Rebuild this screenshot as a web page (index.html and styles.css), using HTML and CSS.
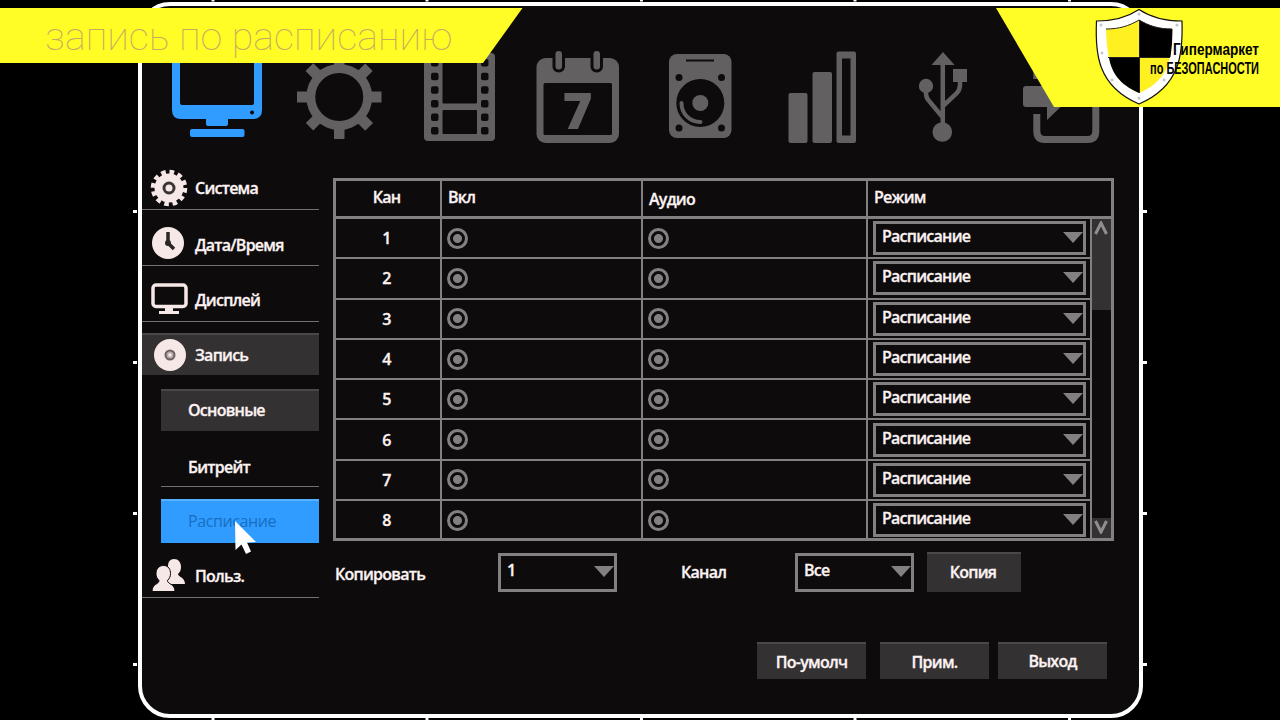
FILE: index.html
```html
<!DOCTYPE html>
<html lang="ru">
<head>
    <meta charset="UTF-8">
    <meta name="viewport" content="width=device-width, initial-scale=1.0">
    <title>Запись по расписанию</title>
    <link rel="stylesheet" href="styles.css">
</head>
<body>
    <div class="screen">
        <!-- border ticks -->
        <svg class="ticks" width="1280" height="720" fill="#fff">
            <path d="M211.500 0h3v1.500h-3zM425.500 0h3v1.500h-3zM640 0h3v1.500h-3zM853.500 0h3v1.500h-3zM1068 0h3v1.500h-3z"/>
            <path d="M211.500 718h3v2h-3zM425.500 718h3v2h-3zM640 718h3v2h-3zM853.500 718h3v2h-3zM1068 718h3v2h-3z"/>
            <path d="M133 210h4v3h-4zM133 361h4v3h-4zM133 512h4v3h-4zM133 663h4v3h-4z"/>
            <path d="M1143 210h4v3h-4zM1143 361h4v3h-4zM1143 512h4v3h-4zM1143 663h4v3h-4z"/>
        </svg>

        <div class="frame">
            <div class="toolbar">
                <svg class="tool active" width="92" height="100" viewBox="171 46 92 100">
                    <path fill-rule="evenodd" d="M180 48h74q8 0 8 8v54q0 9-9 9h-25v5q0 2-3 2h-16q-3 0-3-2v-5h-25q-9 0-9-9V56q0-8 8-8zm2 8q-2 0-2 2v45q0 2 2 2h70q2 0 2-2V58q0-2-2-2zm70 54.500a2 2 0 1 0 .1 0z"/>
                    <rect x="190" y="129" width="54.500" height="8" rx="2"/>
                </svg>
                <svg class="tool gear" width="86" height="100" viewBox="296 46 86 100">
                    <path d="M334 55h10.500v84H334zM297 91.500h84.500v11H297z"/>
                    <path transform="rotate(45 339.250 97)" d="M334 55h10.500v84H334zM297 91.500h84.500v11H297z"/>
                    <circle cx="339.250" cy="97" r="33"/>
                    <circle class="hole" cx="339.250" cy="97" r="24"/>
                </svg>
                <svg class="tool film" width="72" height="100" viewBox="424 46 72 100">
                    <rect x="424" y="53" width="71" height="88" rx="4"/>
                    <g class="hole">
                        <rect x="442.500" y="60" width="34.500" height="43.500" rx="1"/>
                        <rect x="442.500" y="110" width="34.500" height="24" rx="1"/>
                        <g id="holes">
                            <rect x="431" y="59" width="7.500" height="7.500" rx="2"/>
                            <rect x="431" y="72.700" width="7.500" height="7.500" rx="2"/>
                            <rect x="431" y="86.300" width="7.500" height="7.500" rx="2"/>
                            <rect x="431" y="100" width="7.500" height="7.500" rx="2"/>
                            <rect x="431" y="113.500" width="7.500" height="7.500" rx="2"/>
                            <rect x="431" y="127" width="7.500" height="7.500" rx="2"/>
                        </g>
                        <use href="#holes" x="50"/>
                    </g>
                </svg>
                <svg class="tool calendar" width="84" height="100" viewBox="536 46 84 100">
                    <rect x="536.500" y="58" width="82.500" height="85" rx="9"/>
                    <rect class="hole" x="543.500" y="83" width="68.500" height="52" rx="1.500"/>
                    <rect class="hole" x="552.500" y="48" width="12.500" height="24.500" rx="6"/>
                    <rect class="hole" x="590.500" y="48" width="12.500" height="24.500" rx="6"/>
                    <rect x="555.500" y="51" width="6.500" height="18.500" rx="3.200"/>
                    <rect x="593.500" y="51" width="6.500" height="18.500" rx="3.200"/>
                    <text class="day" x="562.500" y="128.500" textLength="30" lengthAdjust="spacingAndGlyphs">7</text>
                </svg>
                <svg class="tool disk" width="64" height="100" viewBox="668 46 64 100">
                    <rect x="669" y="54" width="62.500" height="84" rx="8"/>
                    <rect class="hole" x="686" y="59.500" width="28" height="2"/>
                    <g class="hole">
                        <circle cx="679" cy="77.500" r="3.500"/>
                        <circle cx="721.500" cy="77.500" r="3.500"/>
                        <circle cx="679" cy="128" r="3.500"/>
                        <circle cx="721.500" cy="128" r="3.500"/>
                        <circle cx="700.300" cy="103" r="24"/>
                    </g>
                    <circle cx="700.300" cy="103" r="8"/>
                    <path class="line" stroke-width="4" stroke-linecap="round" d="M681.500 103c0 11 8.500 19 19 19"/>
                </svg>
                <svg class="tool bars" width="70" height="100" viewBox="787 46 70 100">
                    <rect x="788.500" y="93" width="19" height="50" rx="2"/>
                    <rect x="812.500" y="72" width="19.500" height="71" rx="2"/>
                    <rect x="836.500" y="51.500" width="19.500" height="91.500" rx="2"/>
                    <rect class="hole" x="842" y="58.500" width="8.500" height="77"/>
                </svg>
                <svg class="tool usb" width="50" height="100" viewBox="918 46 50 100">
                    <path d="M943 52l11.500 13h-23z"/>
                    <circle cx="942.300" cy="132" r="9.800"/>
                    <circle cx="926" cy="86" r="7.200"/>
                    <rect x="953" y="69" width="14" height="13"/>
                    <path class="line" stroke-width="4.500" d="M942.800 62v65M926 88v6q0 4 4 8l12.500 15M960 80v5q0 5-4 9l-13 12"/>
                </svg>
                <svg class="tool logout" width="78" height="100" viewBox="1022 46 78 100">
                    <path class="line" stroke-width="7" d="M1036.800 79v-9q0-10 10-10h38q11 0 11 10v61q0 8.500-8 8.500h-43q-8 0-8-8.500v-17"/>
                    <path d="M1026 86h21V72l25 24-25 24v-13h-21q-3 0-3-3V89q0-3 3-3z"/>
                </svg>
            </div>

            <div class="main">
                <div class="sidebar">
                    <div class="item">
                        <svg class="icon" width="38" height="38" viewBox="-19 -19 38 38">
                            <circle r="14.500"/>
                            <circle r="16" fill="none" stroke="#f7e8e8" stroke-width="4.500" stroke-dasharray="4.600 3.780"/>
                            <circle r="5" fill="none" stroke="#3a3535" stroke-width="3"/>
                        </svg>
                        <span>Система</span>
                    </div>
                    <div class="item time">
                        <svg class="icon" width="38" height="38" viewBox="-19 -19 38 38">
                            <circle cx="-1" cy="-1" r="16"/>
                            <path d="M-1-12v11l6 6" fill="none" stroke="#2a2626" stroke-width="3.500"/>
                            <circle cx="-1" cy="-1" r="3" fill="#2a2626"/>
                        </svg>
                        <span>Дата/Время</span>
                    </div>
                    <div class="item">
                        <svg class="icon" width="38" height="38" viewBox="-19 -19 38 38">
                            <rect x="-16" y="-15" width="33" height="21.500" rx="3" fill="none" stroke="#f7e8e8" stroke-width="3.500"/>
                            <path d="M-4 7h8v4h6v3h-20v-3h6z"/>
                        </svg>
                        <span>Дисплей</span>
                    </div>
                    <div class="item filled">
                        <svg class="icon" width="38" height="38" viewBox="-19 -19 38 38">
                            <circle cx="1" r="16"/>
                            <circle cx="1" r="4.500" fill="#b5a9a9" stroke="#6b6363" stroke-width="2"/>
                            <circle cx="1" r="1.800" fill="#f7e8e8"/>
                        </svg>
                        <span>Запись</span>
                    </div>
                    <div class="item sub filled"><span>Основные</span></div>
                    <div class="item sub bitrate"><span>Битрейт</span></div>
                    <div class="item sub selected"><span>Расписание</span></div>
                    <div class="item users">
                        <svg class="icon" width="38" height="38" viewBox="-19 -19 38 38">
                            <path d="M5-17c4.500 0 7 3.500 7 8 0 3-1 5-3 7 0 3 7 3 7 10H-1v-18c0-4 2-7 6-7z"/>
                            <path stroke="#0d0b0c" d="M-5.500-10.500c5 0 7 4 7 8 0 3-1 5-3 7 0 4 7.500 3 7.500 11h-23c0-8 7-7 7-11-2-2-3-4-3-7 0-4 2.500-8 7.500-8z"/>
                        </svg>
                        <span>Польз.</span>
                    </div>
                </div>

                <div class="content">
                    <div class="table">
                        <div class="row head">
                            <div class="cell num">Кан</div>
                            <div class="cell">Вкл</div>
                            <div class="cell audio">Аудио</div>
                            <div class="cell">Режим</div>
                        </div>
                        <div class="body">
                            <div class="rows" id="rows"></div>
                            <div class="scrollbar">
                                <div class="thumb">
                                    <svg width="16" height="14" viewBox="0 0 16 14"><path d="M2.500 13L8 2l5.500 11"/></svg>
                                </div>
                                <div class="down">
                                    <svg width="16" height="14" viewBox="0 0 16 14"><path d="M2.500 1L8 12l5.500-11"/></svg>
                                </div>
                            </div>
                        </div>
                    </div>

                    <div class="copy">
                        <span class="copy-from">Копировать</span>
                        <div class="select"><span>1</span><i class="arrow"></i></div>
                        <span class="copy-to">Канал</span>
                        <div class="select"><span>Все</span><i class="arrow"></i></div>
                        <div class="button">Копия</div>
                    </div>

                    <div class="actions">
                        <div class="button">По-умолч</div>
                        <div class="button">Прим.</div>
                        <div class="button exit">Выход</div>
                    </div>
                </div>
            </div>
        </div>

        <svg class="banner" width="1280" height="110">
            <path fill="#fffc26" d="M0 8h522.500L483 63H0z"/>
            <text class="title" x="45" y="49.500" textLength="408" lengthAdjust="spacingAndGlyphs">запись по расписанию</text>
            <path fill="#fffc26" d="M996 8h284v99h-226z"/>
            <path fill="#fff" stroke="#15120c" stroke-width="1.200" d="M1139 9.500c12 8 26 11.500 43 11.500 1 32-1 65-43 83-42-18-44-51-42.500-83 17 0 30.500-3.500 42.500-11.500z"/>
            <path fill="#fff022" d="M1139 20c10 6 20 9 33 9-.5 29-2 51-33 64-29-13-32-35-33-64 13 0 23-3 33-9z"/>
            <path d="M1139.500 20c10 6 20 9 33 9q0 15-2 28h-31zM1139 58v35c-20-9-27-20-30-35z"/>
            <path stroke="#222" stroke-width="1" fill="none" d="M1106 29c13 0 23-3 33-9 10 6 20 9 33 9M1139.500 20v73M1108 57.500h62"/>
            <g fill="#c3c6cf">
                <circle cx="1139" cy="14" r="1.500"/>
                <circle cx="1101" cy="25" r="1.500"/>
                <circle cx="1177" cy="25" r="1.500"/>
                <circle cx="1102" cy="53" r="1.500"/>
                <circle cx="1112" cy="80" r="1.500"/>
                <circle cx="1164" cy="80" r="1.500"/>
                <circle cx="1139" cy="98" r="1.500"/>
            </g>
            <text class="brand" x="1173" y="55" textLength="86" lengthAdjust="spacingAndGlyphs">Гипермаркет</text>
            <text class="brand" x="1150" y="74" textLength="109" lengthAdjust="spacingAndGlyphs">по БЕЗОПАСНОСТИ</text>
        </svg>

        <svg class="cursor" width="24" height="36" viewBox="0 0 24 36">
            <path fill="#fff" d="M1 1l21 21-9 .500 4 9-5 2.500-4.500-9.500-6 5.500z"/>
        </svg>
    </div>

    <script>
        const rows = document.getElementById("rows");
        for (let i = 1; i <= 8; i++) {
            rows.innerHTML += `
                <div class="row">
                    <div class="cell num">${i}</div>
                    <div class="cell"><i class="radio"></i></div>
                    <div class="cell"><i class="radio"></i></div>
                    <div class="cell mode"><div class="select"><span>Расписание</span><i class="arrow"></i></div></div>
                </div>`;
        }
    </script>
</body>
</html>
```
FILE: styles.css
```css
* {
    box-sizing: border-box;
}
body {
    margin: 0;
    background: #000;
    color: #fdf3f3;
    font-family: "Open Sans", "Noto Sans", sans-serif;
    font-size: 16px;
    font-weight: 600;
    letter-spacing: -0.75px;
    line-height: 20px;
    -webkit-text-stroke: 0.3px;
}
svg {
    display: block;
    flex: none;
}
svg text {
    letter-spacing: 0;
    -webkit-text-stroke: 0;
}
.screen {
    position: relative;
    width: 1280px;
    height: 720px;
    padding: 2px 137px 2px 138px;
    overflow: hidden;
}
.ticks, .banner {
    position: absolute;
    top: 0;
    left: 0;
}
.frame {
    height: 716px;
    border: 4px solid #fff;
    border-radius: 32px;
    background: #0d0b0c;
}

/* top icons */
.toolbar {
    display: flex;
    height: 162px;
    padding: 40px 0 0 29px;
}
.tool {
    fill: #636061;
}
.tool.active {
    fill: #309cff;
}
.tool .hole {
    fill: #0d0b0c;
}
.tool .line {
    fill: none;
    stroke: #636061;
}
.gear {
    margin-left: 33px;
}
.film {
    margin-left: 42px;
}
.calendar {
    margin-left: 40px;
}
.disk {
    margin-left: 48px;
}
.bars {
    margin-left: 55px;
}
.usb {
    margin-left: 61px;
}
.logout {
    margin-left: 54px;
}
.day {
    font: 800 50px "Open Sans", sans-serif;
}

.main {
    display: flex;
}
.sidebar {
    display: flex;
    flex-direction: column;
    width: 177px;
}
.item {
    display: flex;
    align-items: center;
    gap: 7px;
    height: 42px;
    margin-bottom: 14px;
    padding: 0 0 1px 8px;
    border-bottom: 1px solid #737071;
}
.item.time span {
    padding-top: 2px;
}
.item.filled {
    height: 42px;
    margin-top: -3px;
    border: 0;
    border-top: 2px solid #4b4849;
    background: #343132;
}
.icon {
    fill: #f7e8e8;
}
.item.sub {
    margin-left: 19px;
    padding-left: 27px;
}
.item.sub.filled {
    margin-top: 0;
    padding-bottom: 3px;
}
.item.bitrate {
    margin-bottom: 12px;
    padding: 2px 0 0 27px;
}
.item.selected {
    height: 44px;
    margin-bottom: 13px;
    padding-bottom: 3px;
    border: 0;
    border-top: 2px solid #55b0ff;
    background: #309cff;
    color: #176fc4;
    font-weight: 400;
    letter-spacing: -0.4px;
    -webkit-text-stroke: 0;
}

/* schedule table */
.content {
    margin: 10px 0 0 14px;
    width: 781px;
}
.table {
    width: 781px;
    height: 363px;
    border: 3px solid #838081;
}
.row {
    display: grid;
    grid-template-columns: 104px 201px 225px 1fr;
    height: 40.300px;
    border-bottom: 2px solid #838081;
}
.row.head {
    height: 38px;
    border-bottom-width: 3px;
}
.cell {
    display: flex;
    align-items: center;
    padding-left: 6px;
    border-left: 2px solid #838081;
}
.head .cell {
    padding-bottom: 4px;
}
.cell.num {
    justify-content: center;
    padding-left: 0;
    padding-right: 3px;
    border-left: 0;
}
.head .cell.audio {
    padding-bottom: 0;
    padding-top: 1px;
}
.cell.mode {
    padding-left: 5px;
}
.body {
    display: flex;
    height: 319px;
    overflow: hidden;
}
.rows {
    width: 754px;
}
.radio {
    width: 21px;
    height: 21px;
    margin-left: -1px;
    border: 3px solid #838081;
    border-radius: 50%;
    background: radial-gradient(circle, #838081 4px, transparent 5px);
}
.select {
    display: flex;
    justify-content: space-between;
    align-items: center;
    height: 34px;
    width: 213px;
    padding: 0 0 4px 6px;
    border: 3px solid #838081;
}
.arrow {
    margin-top: 3px;
    border: 10px solid transparent;
    border-top: 11px solid #838081;
    border-bottom: 0;
}
.scrollbar {
    display: flex;
    flex-direction: column;
    justify-content: space-between;
    width: 21px;
    border-left: 2px solid #838081;
}
.scrollbar path {
    fill: none;
    stroke: #918e8f;
    stroke-width: 3;
}
.thumb, .down {
    padding: 2px 1px;
    background: #343132;
}
.thumb {
    height: 91px;
}
.down {
    height: 20px;
}

.copy {
    display: flex;
    align-items: center;
    height: 40px;
    margin-top: 11px;
    padding-left: 2px;
}
.copy .select {
    width: 119px;
    height: 39px;
}
.copy-from {
    width: 163px;
    padding-top: 4px;
}
.copy-to {
    width: 178px;
    padding-left: 64px;
}
.button {
    display: flex;
    justify-content: center;
    align-items: center;
    width: 109px;
    height: 37px;
    border-top: 2px solid #4b4849;
    background: #343132;
}
.copy .button {
    width: 94px;
    height: 40px;
    margin-left: 13px;
    padding: 0 2px 2px 0;
}
.actions {
    display: flex;
    justify-content: flex-end;
    gap: 14px;
    margin-top: 50px;
    padding-right: 7px;
}
.button.exit {
    margin-left: -5px;
    padding-bottom: 2px;
}

.title {
    fill: #c4ab63;
    font: 100 39px Roboto, sans-serif;
}
.brand {
    font: bold 17px "Liberation Sans Narrow", "Liberation Sans", sans-serif;
}
.cursor {
    position: absolute;
    top: 520px;
    left: 234px;
}
```
